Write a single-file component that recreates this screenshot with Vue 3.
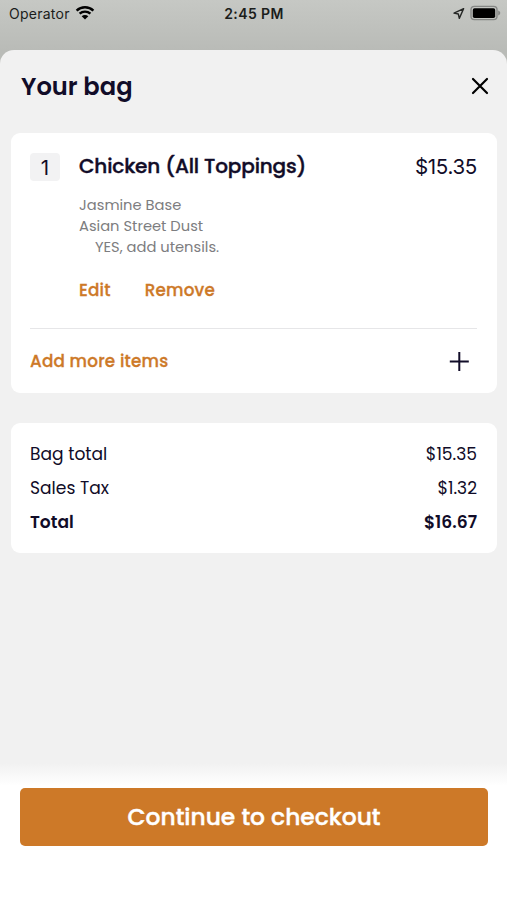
<script setup>
const item = {
  quantity: 1,
  name: 'Chicken (All Toppings)',
  price: '$15.35',
}
const totals = [
  { label: 'Bag total', amount: '$15.35' },
  { label: 'Sales Tax', amount: '$1.32' },
  { label: 'Total', amount: '$16.67', strong: true },
]
</script>

<template>
  <div class="screen">
    <header class="status">
      <div class="carrier">
        <span class="operator">Operator</span>
        <svg class="wifi" width="20" height="16" viewBox="0 0 20 16">
          <path d="M1.6 5.6A12.2 12.2 0 0 1 18.4 5.6" />
          <path d="M4.6 8.7A8 8 0 0 1 15.4 8.7" />
          <path class="dot" d="M10 14.6 6.7 11.3A4.7 4.7 0 0 1 13.3 11.3Z" />
        </svg>
      </div>
      <span class="time">2:45 PM</span>
      <div class="indicators">
        <svg width="12" height="13" viewBox="0 0 12 13">
          <path d="M10.6 1.7 1 6.1 5.3 7 6.3 11.4Z" fill="none" stroke="#252725" stroke-width="1.4" stroke-linejoin="round" />
        </svg>
        <svg width="31" height="16" viewBox="0 0 31 16">
          <rect x="1" y="1.4" width="26" height="13.2" rx="3.4" fill="none" stroke="#858785" stroke-width="1.4" />
          <rect x="2.8" y="3.3" width="22.4" height="9.6" rx="1.7" fill="#000" />
          <path d="M28.2 5.6C30.9 6.8 30.9 9.4 28.2 10.6Z" fill="#858785" />
        </svg>
      </div>
    </header>

    <main class="sheet">
      <div class="heading">
        <h1>Your bag</h1>
        <svg class="close" width="18" height="18" viewBox="0 0 18 18">
          <path d="M2 2 16 16M16 2 2 16" />
        </svg>
      </div>

      <section class="card bag">
        <div class="item">
          <div class="quantity">{{ item.quantity }}</div>
          <div class="details">
            <h2>{{ item.name }}</h2>
            <ul>
              <li>Jasmine Base</li>
              <li>Asian Street Dust</li>
              <li class="utensils">YES, add utensils.</li>
            </ul>
            <div class="actions">
              <a>Edit</a>
              <a>Remove</a>
            </div>
          </div>
          <div class="price">{{ item.price }}</div>
        </div>
        <div class="more">
          <a>Add more items</a>
          <svg width="20" height="20" viewBox="0 0 20 20">
            <path d="M10.3 .9V19.9M.8 10.4H19.8" />
          </svg>
        </div>
      </section>

      <section class="card totals">
        <div v-for="row in totals" :key="row.label" class="row" :class="{ strong: row.strong }">
          <span>{{ row.label }}</span>
          <span>{{ row.amount }}</span>
        </div>
      </section>

      <footer>
        <button>Continue to checkout</button>
      </footer>
    </main>
  </div>
</template>

<style>
body {
  margin: 0;
}
</style>

<style scoped>
.screen {
  width: 507px;
  height: 900px;
  display: flex;
  flex-direction: column;
  overflow: hidden;
  font-family: Poppins, Inter, sans-serif;
  color: #110c28;
  background: linear-gradient(#c6c8c4, #b9bbb7 50px, #b9bbb7);
  white-space: nowrap;
}
.status {
  height: 50px;
  flex: none;
  display: grid;
  grid-template-columns: 1fr auto 1fr;
  align-items: start;
  box-sizing: border-box;
  padding: 5px 6px 0 9px;
  font-family: Inter, sans-serif;
  font-size: 14px;
  line-height: 18px;
  color: #1b1d1b;
}
.carrier {
  display: flex;
  gap: 5px;
}
.operator {
  letter-spacing: 0.25px;
}
.wifi {
  fill: none;
  stroke: #000;
  stroke-width: 2.4;
}
.wifi .dot {
  fill: #000;
  stroke: none;
}
.time {
  margin-right: 2px;
  font-weight: 600;
  letter-spacing: 0.4px;
}
.indicators {
  display: flex;
  justify-content: flex-end;
  align-items: center;
  gap: 5px;
}
.sheet {
  flex: 1;
  display: flex;
  flex-direction: column;
  background: #f1f1f1;
  border-radius: 14px 14px 0 0;
}
.heading {
  height: 83px;
  display: flex;
  align-items: flex-start;
  justify-content: space-between;
  box-sizing: border-box;
  padding: 20px 18px 0 21px;
}
h1,
h2,
ul {
  margin: 0;
  padding: 0;
}
h1 {
  font-size: 24.2px;
  line-height: 34px;
  font-weight: 600;
}
.close {
  margin-top: 7px;
  fill: none;
  stroke: #000;
  stroke-width: 2.2;
  stroke-linecap: round;
}
.card {
  box-sizing: border-box;
  margin: 0 10px 0 11px;
  background: #fff;
  border-radius: 9px;
}
.bag {
  height: 260px;
  padding: 0 20px 0 19px;
}
.item {
  height: 196px;
  box-sizing: border-box;
  padding-top: 20px;
  display: flex;
  align-items: flex-start;
  border-bottom: 1px solid #e6e6e8;
}
.quantity {
  width: 30px;
  height: 28px;
  margin-right: 19px;
  border-radius: 4px;
  background: #f2f2f3;
  text-align: center;
  font-family: Inter, sans-serif;
  font-size: 20.5px;
  line-height: 29px;
}
.details {
  flex: 1;
}
h2 {
  font-size: 20px;
  line-height: 26px;
  font-weight: 500;
  letter-spacing: -0.14px;
  -webkit-text-stroke: 0.4px currentColor;
}
ul {
  margin-top: 16px;
  list-style: none;
  font-size: 14.7px;
  line-height: 21px;
  color: #7d7d80;
}
.utensils {
  padding-left: 16px;
}
.actions {
  margin-top: 20px;
  display: flex;
  gap: 34px;
}
a {
  font-size: 16.8px;
  line-height: 24px;
  font-weight: 500;
  letter-spacing: 0.2px;
  color: #cd7928;
  -webkit-text-stroke: 0.3px currentColor;
}
.price {
  font-family: Inter, sans-serif;
  font-size: 20.5px;
  line-height: 28px;
  letter-spacing: -0.3px;
}
.more {
  height: 64px;
  display: flex;
  align-items: center;
  justify-content: space-between;
  padding-right: 8px;
}
.more svg {
  fill: none;
  stroke: #110c28;
  stroke-width: 2;
}
.totals {
  height: 130px;
  margin-top: 30px;
  padding: 14px 20px 0 19px;
  font-size: 17.1px;
  line-height: 34px;
}
.row {
  display: flex;
  justify-content: space-between;
}
.strong {
  font-weight: 600;
}
footer {
  height: 137px;
  margin-top: auto;
  padding: 25px 19px 0 20px;
  box-sizing: border-box;
  background: linear-gradient(#f1f1f1, #fff 23px);
}
button {
  display: block;
  width: 100%;
  height: 58px;
  padding: 0 0 2px;
  border: 0;
  border-radius: 5px;
  background: #cd7928;
  color: #fff;
  font: inherit;
  font-size: 23.4px;
  font-weight: 500;
  -webkit-text-stroke: 0.4px currentColor;
}
</style>
